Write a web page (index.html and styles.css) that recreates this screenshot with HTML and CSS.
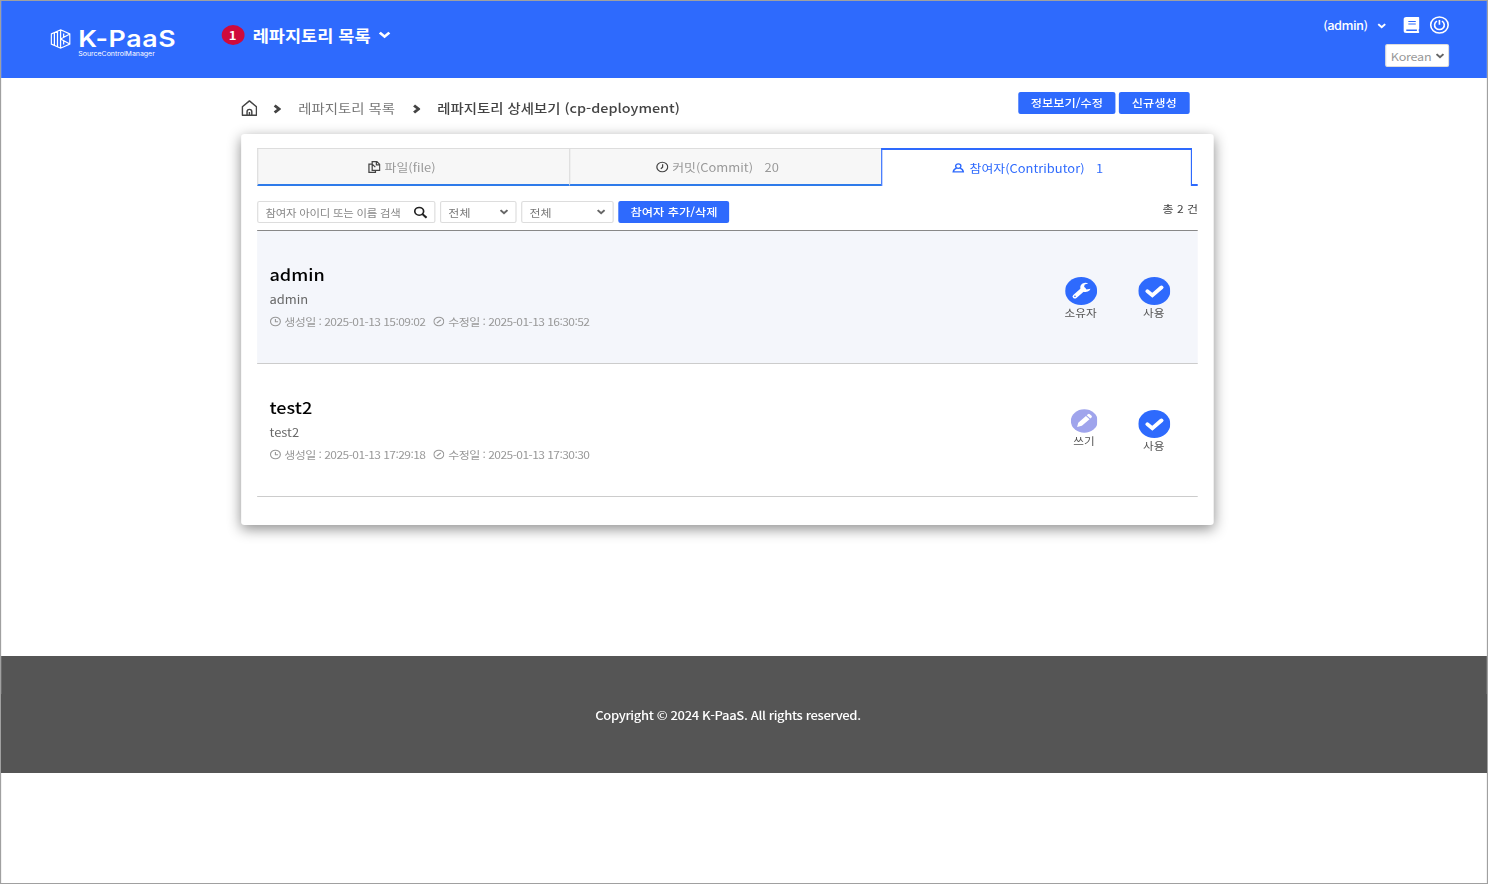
FILE: index.html
```html
<!DOCTYPE html>
<html lang="ko">
<head>
<meta charset="utf-8">
<title>K-PaaS SourceControlManager</title>
<link rel="stylesheet" href="styles.css">
</head>
<body>
<svg class="defs" width="0" height="0">
  <symbol id="chev" viewBox="0 0 10 7"><path d="M1.200 1.300 5 5l3.800-3.700" fill="none" stroke="currentColor" stroke-width="2.200"/></symbol>
  <symbol id="arrow" viewBox="0 0 8 10"><path d="M1.500 1 6 5 1.500 9" fill="none" stroke="currentColor" stroke-width="2.900"/></symbol>
  <symbol id="clock" viewBox="0 0 12 12"><circle cx="6" cy="6" r="5.200" fill="none" stroke="currentColor" stroke-width="1.200"/><path d="M6 3v3.300h2.800" fill="none" stroke="currentColor" stroke-width="1.200"/></symbol>
  <symbol id="edit" viewBox="0 0 12 12"><circle cx="6" cy="6" r="5.200" fill="none" stroke="currentColor" stroke-width="1.200"/><path d="M4 8 8 4" fill="none" stroke="currentColor" stroke-width="1.500"/></symbol>
  <symbol id="check" viewBox="0 0 28 28"><circle cx="14" cy="14" r="14" fill="#2e6afd"/><path d="m8 14.200 4.300 4 8-7.800" fill="none" stroke="#fff" stroke-width="3.600" stroke-linecap="round"/></symbol>
</svg>
<div class="page">
  <header class="header">
    <div class="logo">
      <svg class="logo-mark" viewBox="0 0 20 20" preserveAspectRatio="none"><path d="M10 .8 19 5v10l-9 4.200L1 15V5zM4 4v12M7 2.500v15M10 1v18M10 10l9-5M10 10l9 5M13 4.500v4M13 11.500v4" fill="none" stroke="#fff" stroke-width="1.200"/></svg>
      <div class="logo-words"><span class="logo-name">K-PaaS</span><span class="logo-sub">SourceControlManager</span></div>
    </div>
    <nav class="nav"><span class="badge">1</span><span class="nav-text">레파지토리 목록</span><svg class="nav-chev"><use href="#chev"/></svg></nav>
    <div class="tools">
      <div class="user">
        <span class="user-name">(admin)</span><svg class="user-chev"><use href="#chev"/></svg>
        <svg class="book" viewBox="0 0 14 16" preserveAspectRatio="none"><path d="M2.500 0H13a1 1 0 0 1 1 1v10.500a1 1 0 0 1-.6.9v1.800a.9.900 0 0 1 .6.9.900.900 0 0 1-.9.900H2.500A2.500 2.500 0 0 1 0 13.500v-11A2.500 2.500 0 0 1 2.500 0z" fill="#fff"/><path d="M4.300 4.500h6.500M4.300 7h6.500" stroke="#2e6afd" stroke-width=".9"/><path d="M2.500 13.300h9.300" stroke="#2e6afd" stroke-width="1.600"/></svg>
        <svg class="power" viewBox="0 0 18 18" preserveAspectRatio="none"><circle cx="9" cy="9" r="8.100" fill="none" stroke="#fff" stroke-width="1.500"/><path d="M6.700 5.200a4.500 4.500 0 1 0 4.600 0M9 4v4.800" fill="none" stroke="#fff" stroke-width="1.500"/></svg>
      </div>
      <div class="lang"><span>Korean</span><svg class="select-chev"><use href="#chev"/></svg></div>
    </div>
  </header>
  <main class="main">
    <div class="topline">
      <svg class="home" viewBox="0 0 16 16" preserveAspectRatio="none"><path d="M1.200 6.800 8 .9l6.800 5.900v8.400H1.200z M5.700 15v-3.300a2.300 2.300 0 0 1 4.600 0V15M8 12v3" fill="none" stroke="#444" stroke-width="1.400" stroke-linejoin="round"/></svg>
      <svg class="arrow"><use href="#arrow"/></svg>
      <span class="crumb">레파지토리 목록</span>
      <svg class="arrow"><use href="#arrow"/></svg>
      <span class="crumb current">레파지토리 상세보기 (cp-deployment)</span>
      <div class="actions"><button class="btn info">정보보기/수정</button><button class="btn create">신규생성</button></div>
    </div>
    <section class="card">
      <div class="tabs">
        <div class="tab first"><svg class="tab-icon" viewBox="0 0 12 12" preserveAspectRatio="none"><path d="M4 3.200H.9v8.200h6.200V9.500M4 .7h4.500l2.700 2.700v6H4zM8 .8v3h3M4 3.200l3 3" fill="none" stroke="#444" stroke-width="1.200"/></svg><span>파일(file)</span></div>
        <div class="tab second"><svg class="tab-icon" viewBox="0 0 12 12"><circle cx="6" cy="6" r="5.200" fill="none" stroke="#444" stroke-width="1.200"/><path d="M6.300 3v3.200L4.600 7.900" fill="none" stroke="#444" stroke-width="1.200"/></svg><span>커밋(Commit)</span><span class="count">20</span></div>
        <div class="tab active"><svg class="tab-icon" viewBox="0 0 12 12"><circle cx="6" cy="3.900" r="2.500" fill="none" stroke="#2e6afd" stroke-width="1.300"/><path d="M4.400 6.200C2.500 6.900 1.500 8.200 1.200 10.300h9.600C10.500 8.200 9.500 6.900 7.600 6.200" fill="none" stroke="#2e6afd" stroke-width="1.400"/></svg><span>참여자(Contributor)</span><span class="count">1</span></div>
        <div class="tab-rest"></div>
      </div>
      <div class="filters">
        <div class="field search"><span>참여자 아이디 또는 이름 검색</span><svg class="search-icon" viewBox="0 0 13 13"><circle cx="5.200" cy="5.200" r="4.200" fill="none" stroke="#222" stroke-width="1.600"/><path d="m8.300 8.300 3.900 3.900" stroke="#222" stroke-width="2.100"/></svg></div>
        <div class="field select one"><span>전체</span><svg class="select-chev"><use href="#chev"/></svg></div>
        <div class="field select two"><span>전체</span><svg class="select-chev"><use href="#chev"/></svg></div>
        <button class="btn members">참여자 추가/삭제</button>
        <span class="total">총 2 건</span>
      </div>
      <div class="row shaded">
        <div class="person">
          <div class="name">admin</div>
          <div class="id">admin</div>
          <div class="dates"><svg class="mini"><use href="#clock"/></svg><span class="date">생성일 : 2025-01-13 15:09:02</span><svg class="mini"><use href="#edit"/></svg><span class="date">수정일 : 2025-01-13 16:30:52</span></div>
        </div>
        <div class="status role"><svg class="disc" viewBox="0 0 28 28"><circle cx="14" cy="14" r="14" fill="#2e6afd"/><path d="M8.500 19.500 16 12" stroke="#fff" stroke-width="4" stroke-linecap="round"/><path d="M20.200 6.500a4.600 4.600 0 1 0 2 5.300l-3.400.7-2.300-2.300.6-2.800z" fill="#fff"/><circle cx="8.600" cy="19.300" r=".8" fill="#2e6afd"/></svg><span>소유자</span></div>
        <div class="status"><svg class="disc"><use href="#check"/></svg><span>사용</span></div>
      </div>
      <div class="row">
        <div class="person">
          <div class="name">test2</div>
          <div class="id">test2</div>
          <div class="dates"><svg class="mini"><use href="#clock"/></svg><span class="date">생성일 : 2025-01-13 17:29:18</span><svg class="mini"><use href="#edit"/></svg><span class="date">수정일 : 2025-01-13 17:30:30</span></div>
        </div>
        <div class="status role write"><svg class="disc" viewBox="0 0 28 28"><circle cx="14" cy="14" r="14" fill="#9fa4ec"/><path d="m6.500 21 1.200-5 8-8 3.800 3.800-8 8zM16.500 7.200l1.300-1.300q1-.8 2 0l1.800 1.800q.8 1 0 2l-1.300 1.300z" fill="#fff"/></svg><span>쓰기</span></div>
        <div class="status"><svg class="disc"><use href="#check"/></svg><span>사용</span></div>
      </div>
    </section>
  </main>
  <footer class="footer">Copyright © 2024 K-PaaS. All rights reserved.</footer>
</div>
</body>
</html>
```

FILE: styles.css
```css
* { box-sizing: border-box; }
html, body { margin: 0; height: 884px; overflow: hidden; background: #fff; }
svg { display: block; flex: none; }
.defs { position: absolute; }
/* The whole interface is drawn in a wide aspect of 8:7. */
.page {
  width: 1302px; height: 884px; display: flex; flex-direction: column;
  transform: scaleX(1.142857); transform-origin: 0 0;
  border: 1px solid #a0a0a0; border-width: 1px .875px;
  font-family: "Noto Sans CJK KR", "Noto Sans", sans-serif; font-size: 11px; color: #444;
  white-space: nowrap;
}
.header { height: 77px; background: #2e6afd; color: #fff; display: flex; flex: none; align-items: flex-start; padding-left: 42.800px; }
.logo { display: flex; width: 149.800px; padding-top: 28px; }
.logo-mark { width: 18px; height: 20px; }
.logo-words { display: flex; flex-direction: column; margin-left: 6.700px; }
.logo-name { font: 600 23.400px/20px Inter, sans-serif; letter-spacing: .6px; }
.logo-sub { font: 400 6.100px/9px Inter, sans-serif; }
.nav { display: flex; align-items: center; height: 24px; margin-top: 22px; font-weight: 700; font-size: 15.350px; }
.badge { width: 20px; height: 20px; border-radius: 50%; background: #cf0a3c; font-size: 11.500px; line-height: 20px; text-align: center; margin-right: 7.500px; }
.nav-chev { width: 11px; height: 8px; margin-left: 7px; }
.tools { margin-left: auto; margin-right: 33px; display: flex; flex-direction: column; align-items: flex-end; padding-top: 13px; }
.user { display: flex; align-items: center; height: 22px; font-size: 11.200px; font-weight: 500; }
.user-name { letter-spacing: -.5px; }
.user-chev { width: 8px; height: 6px; margin: 2px 15px 0 8px; }
.book { width: 14px; height: 16px; margin: -1px 9.500px 0 0; }
.power { width: 17px; height: 18px; margin-top: -1px; }
.lang { width: 56px; height: 23px; margin-top: 8px; background: #fff; border: 1px solid #ddd; border-radius: 2px; display: flex; align-items: center; justify-content: space-between; padding: 0 3px 0 4px; color: #999; font-size: 11px; letter-spacing: -.2px; }
.select-chev { width: 8px; height: 6px; color: #666; }
.main { width: 851px; margin-left: 210.300px; height: 578px; flex: none; }
.topline { display: flex; align-items: center; height: 56px; padding-top: 3px; }
.home { width: 14.500px; height: 16px; margin-right: 13.500px; margin-left: -.4px; }
.arrow { width: 7px; height: 10px; margin-right: 15px; margin-top: 3px; }
.crumb { font-size: 12.600px; color: #777; margin-right: 15px; }
.current { color: #444; font-weight: 500; }
.actions { display: flex; gap: 2.500px; margin: -9px 21px 0 auto; }
.btn { height: 22px; padding: 0; border: 0; border-radius: 2px; background: #2e6afd; color: #fff; font: 500 10.700px/22px "Noto Sans CJK KR", sans-serif; text-align: center; }
.info { width: 85.500px; }
.create { width: 62.500px; }
.card { height: 391px; padding: 14px 14px 0; background: #fff; border-radius: 3px; box-shadow: 0 4px 13px rgba(0,0,0,.45); }
.tabs { display: flex; height: 38px; }
.tab { width: 273px; display: flex; align-items: center; justify-content: center; background: #f7f7f7; border-top: 1px solid #ddd; border-left: 1px solid #ddd; border-bottom: 2px solid #2e7bea; color: #999; font-size: 11.300px; }
.first { padding-right: 21px; }
.second { padding-right: 15px; border-right: 0; }
.tab-icon { width: 11px; height: 12px; margin-right: 3px; }
.count { margin-left: 10px; }
.active { width: 272px; background: #fff; color: #2e6afd; border: solid #2e6afd; border-width: 2px 1px 0; padding: 0 16px 1px 0; }
.active .tab-icon { margin-right: 4px; }
.tab-rest { flex: 1; border-bottom: 2px solid #2e6afd; }
.filters { display: flex; height: 45px; padding-top: 15px; border-bottom: 1px solid #888; }
.field { height: 22px; border: 1px solid #ddd; border-radius: 2px; display: flex; align-items: center; justify-content: space-between; padding: 0 6px; margin-right: 4px; color: #777; font-size: 10.500px; }
.search { width: 156px; color: #888; font-size: 10px; letter-spacing: -.22px; }
.search-icon { width: 12px; height: 13px; }
.one { width: 67px; }
.two { width: 81px; }
.members { width: 97px; }
.total { margin-left: auto; font-size: 10.500px; line-height: 16px; }
.row { height: 133px; border-bottom: 1px solid #ccc; display: flex; padding: 31px 24.800px 0 10.500px; }
.shaded { background: #f4f6fb; }
.person { margin-right: auto; }
.name { color: #000; font-size: 15.800px; font-weight: 500; line-height: 26px; }
.id { font-size: 11.300px; line-height: 22px; color: #666; }
.dates { display: flex; align-items: center; height: 22px; color: #999; font-size: 10.500px; }
.mini { width: 10px; height: 11px; margin-right: 3px; }
.date { margin-right: 7px; letter-spacing: -.480px; }
.status { width: 28px; padding-top: 15px; display: flex; flex-direction: column; align-items: center; font-size: 10.200px; line-height: 15px; color: #555; }
.disc { width: 28px; height: 28px; }
.role { margin-right: 36px; }
.write .disc { width: 23.500px; height: 24px; }
.write { width: 24px; margin-right: 35px; padding-top: 14px; }
.footer { height: 117px; flex: none; background: #555; color: #fff; font-size: 11.400px; font-weight: 500; letter-spacing: -.320px; display: flex; justify-content: center; align-items: center; padding: 0 28px 0 0; }
```
